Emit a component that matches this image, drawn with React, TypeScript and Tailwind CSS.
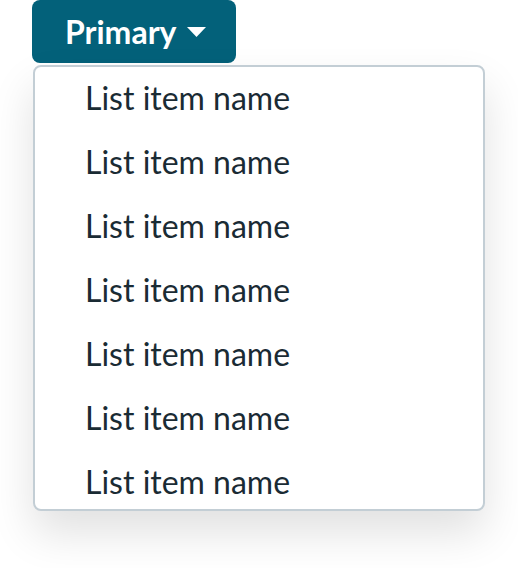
import React from "react";

export default function App() {
  const items = Array.from({ length: 7 });
  return (
    <div className="w-[518px] h-[568px] bg-white relative" style={{ fontFamily: "Lato, 'Noto Sans', sans-serif" }}>
      <div className="absolute left-[32px] top-0 flex flex-col items-start">
        <button className="h-[63px] w-[204px] rounded-[8px] bg-[#03617a] text-white flex items-center pl-[33px] gap-[11px]">
          <span className="text-[32px] font-bold leading-none">Primary</span>
          <svg width="19" height="10" viewBox="0 0 19 10" className="mt-[1px]">
            <path d="M0 0 L19 0 L9.5 10 Z" fill="white" />
          </svg>
        </button>
        <div className="mt-[2px] ml-[1px] w-[452px] h-[446px] rounded-[8px] border-2 border-[#c3ced5] bg-white overflow-hidden shadow-[0_22px_44px_rgba(0,0,0,0.12)]">
          <div className="-mt-[1px]">
            {items.map((_, i) => (
              <div key={i} className="h-[64px] flex items-center pl-[50px] text-[32px] text-[#1a2b34] leading-none">
                List item name
              </div>
            ))}
          </div>
        </div>
      </div>
    </div>
  );
}
